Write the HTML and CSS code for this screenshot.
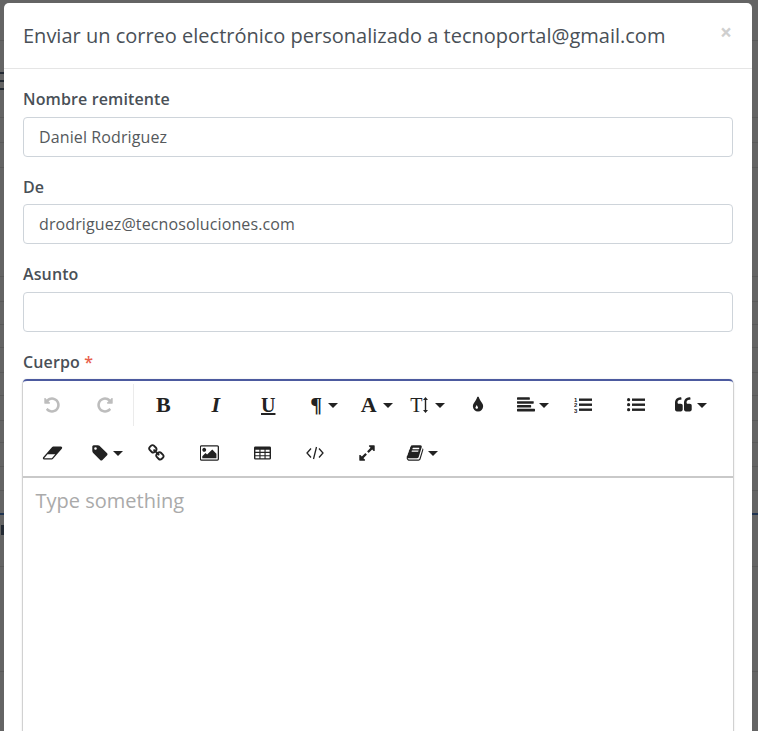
FILE: index.html
```html
<!DOCTYPE html>
<html lang="es">
  <head>
    <meta charset="UTF-8" />
    <title>Enviar correo</title>
    <link rel="stylesheet" href="styles.css">
  </head>
  <body>
    <div class="modal">
      <div class="modal-header">
        <h2>Enviar un correo electrónico personalizado a tecnoportal@gmail.com</h2>
        <span class="close">×</span>
      </div>
      <form class="modal-body">
        <div class="form-group">
          <label for="nombre">Nombre remitente</label>
          <input type="text" id="nombre" value="Daniel Rodriguez" />
        </div>
        <div class="form-group">
          <label for="de">De</label>
          <input type="text" id="de" value="drodriguez@tecnosoluciones.com" />
        </div>
        <div class="form-group">
          <label for="asunto">Asunto</label>
          <input type="text" id="asunto" />
        </div>
        <div class="form-group">
          <label>Cuerpo <span class="req">*</span></label>
          <div class="editor">
            <div class="toolbar">
              <!-- primera fila -->
              <button type="button" class="btn off">
                <svg width="18" height="18" viewBox="0 0 1792 1792"><path d="M1664 896q0 156-61 298t-164 245-245 164-298 61q-172 0-327-72.5t-264-204.5q-7-10-6.5-22.5t8.5-20.5l137-138q10-9 25-9 16 2 23 12 73 95 179 147t225 52q104 0 198.5-40.5t163.5-109.5 109.5-163.5 40.5-198.5-40.5-198.5-109.5-163.5-163.5-109.5-198.5-40.5q-98 0-188 35.5t-160 101.5l137 138q31 30 14 69-17 40-59 40h-448q-26 0-45-19t-19-45v-448q0-42 40-59 39-17 69 14l130 129q107-101 244.5-156.5t284.5-55.5q156 0 298 61t245 164 164 245 61 298z"/></svg>
              </button>
              <button type="button" class="btn off">
                <svg class="flip" width="18" height="18" viewBox="0 0 1792 1792"><path d="M1664 896q0 156-61 298t-164 245-245 164-298 61q-172 0-327-72.5t-264-204.5q-7-10-6.5-22.5t8.5-20.5l137-138q10-9 25-9 16 2 23 12 73 95 179 147t225 52q104 0 198.5-40.5t163.5-109.5 109.5-163.5 40.5-198.5-40.5-198.5-109.5-163.5-163.5-109.5-198.5-40.5q-98 0-188 35.5t-160 101.5l137 138q31 30 14 69-17 40-59 40h-448q-26 0-45-19t-19-45v-448q0-42 40-59 39-17 69 14l130 129q107-101 244.5-156.5t284.5-55.5q156 0 298 61t245 164 164 245 61 298z"/></svg>
              </button>
              <span class="sep"></span>
              <button type="button" class="btn"><span class="glyph bold">B</span></button>
              <button type="button" class="btn"><span class="glyph ital">I</span></button>
              <button type="button" class="btn"><span class="glyph under">U</span></button>
              <button type="button" class="btn drop"><span class="glyph bold">¶</span><i class="caret"></i></button>
              <button type="button" class="btn drop"><span class="glyph bold">A</span><i class="caret"></i></button>
              <button type="button" class="btn drop wide">
                <span class="glyph size">T</span>
                <svg width="5" height="16" viewBox="0 0 5 16"><path d="M2.5 0L5 3H3.2V13H5L2.5 16 0 13H1.8V3H0z"/></svg>
                <i class="caret"></i>
              </button>
              <button type="button" class="btn">
                <svg width="18" height="18" viewBox="0 0 1792 1792"><path d="M896 1152q0-36-20-69-1-1-15.5-22.5t-25.5-38-25-44-21-50.5q-4-16-21-16t-21 16q-7 23-21 50.5t-25 44-25.5 38-15.5 22.5q-20 33-20 69 0 53 37.5 90.5t90.5 37.5 90.5-37.5 37.5-90.5zm512-128q0 212-150 362t-362 150-362-150-150-362q0-145 81-275 6-9 62.5-90.5t101-151 99.5-178 83-201.5q9-30 34-47t51-17 51.5 17 33.5 47q28 93 83 201.5t99.5 178 101 151 62.5 90.5q81 127 81 275z"/></svg>
              </button>
              <button type="button" class="btn drop">
                <svg width="18" height="18" viewBox="0 0 1792 1792"><path d="M1792 1344v128q0 26-19 45t-45 19h-1664q-26 0-45-19t-19-45v-128q0-26 19-45t45-19h1664q26 0 45 19t19 45zm-384-384v128q0 26-19 45t-45 19h-1280q-26 0-45-19t-19-45v-128q0-26 19-45t45-19h1280q26 0 45 19t19 45zm256-384v128q0 26-19 45t-45 19h-1536q-26 0-45-19t-19-45v-128q0-26 19-45t45-19h1536q26 0 45 19t19 45zm-384-384v128q0 26-19 45t-45 19h-1152q-26 0-45-19t-19-45v-128q0-26 19-45t45-19h1152q26 0 45 19t19 45z"/></svg>
                <i class="caret"></i>
              </button>
              <button type="button" class="btn">
                <svg width="18" height="18" viewBox="0 0 18 18">
                  <text class="nums" x="0" y="5.5">1</text>
                  <text class="nums" x="0" y="11">2</text>
                  <text class="nums" x="0" y="16.5">3</text>
                  <rect x="5" y="2.5" width="13" height="2.4"/>
                  <rect x="5" y="7.5" width="13" height="2.4"/>
                  <rect x="5" y="12.5" width="13" height="2.4"/>
                </svg>
              </button>
              <button type="button" class="btn">
                <svg width="18" height="18" viewBox="0 0 18 18">
                  <circle cx="1.6" cy="3.7" r="1.6"/>
                  <circle cx="1.6" cy="8.7" r="1.6"/>
                  <circle cx="1.6" cy="13.7" r="1.6"/>
                  <rect x="5" y="2.5" width="13" height="2.4"/>
                  <rect x="5" y="7.5" width="13" height="2.4"/>
                  <rect x="5" y="12.5" width="13" height="2.4"/>
                </svg>
              </button>
              <button type="button" class="btn drop">
                <svg width="18" height="18" viewBox="0 0 1792 1792"><path d="M768 960v384q0 80-56 136t-136 56h-384q-80 0-136-56t-56-136v-704q0-104 40.5-198.5t109.5-163.5 163.5-109.5 198.5-40.5h64q26 0 45 19t19 45v128q0 26-19 45t-45 19h-64q-106 0-181 75t-75 181v32q0 40 28 68t68 28h224q80 0 136 56t56 136zm896 0v384q0 80-56 136t-136 56h-384q-80 0-136-56t-56-136v-704q0-104 40.5-198.5t109.5-163.5 163.5-109.5 198.5-40.5h64q26 0 45 19t19 45v128q0 26-19 45t-45 19h-64q-106 0-181 75t-75 181v32q0 40 28 68t68 28h224q80 0 136 56t56 136z"/></svg>
                <i class="caret"></i>
              </button>

              <!-- segunda fila -->
              <button type="button" class="btn">
                <svg width="21" height="18" viewBox="0 0 2048 1792"><path d="M960 1408l336-384h-768l-336 384h768zm1013-1077q15 34 9.5 71.5t-30.5 65.5l-896 1024q-38 44-96 44h-768q-38 0-69.5-20.5t-47.5-54.5q-15-34-9.5-71.5t30.5-65.5l896-1024q38-44 96-44h768q38 0 70 20.5t47 54.5z"/></svg>
              </button>
              <button type="button" class="btn drop">
                <svg width="18" height="18" viewBox="0 0 1792 1792"><path d="M576 448q0-53-37.5-90.5t-90.5-37.5-90.5 37.5-37.5 90.5 37.5 90.5 90.5 37.5 90.5-37.5 37.5-90.5zm1067 576q0 53-37 90l-491 492q-39 37-91 37-53 0-90-37l-715-716q-38-37-64.5-101t-26.5-117v-416q0-52 38-90t90-38h416q53 0 117 26.5t102 64.5l715 714q37 39 37 91z"/></svg>
                <i class="caret"></i>
              </button>
              <button type="button" class="btn">
                <svg width="18" height="18" viewBox="0 0 1792 1792"><path d="M1456 1216q0-40-28-68l-208-208q-28-28-68-28-42 0-72 32 3 3 19 18.5t21.5 21.5 15 19 13 25.5 3.5 27.5q0 40-28 68t-68 28q-15 0-27.5-3.5t-25.5-13-19-15-21.5-21.5-18.5-19q-33 31-33 73 0 40 28 68l206 207q27 27 68 27 40 0 68-26l147-146q28-28 28-67zm-703-705q0-40-28-68l-206-207q-28-28-68-28-39 0-68 27l-147 146q-28 28-28 67 0 40 28 68l208 208q27 27 68 27 42 0 72-31-3-3-19-18.5t-21.5-21.5-15-19-13-25.5-3.5-27.5q0-40 28-68t68-28q15 0 27.5 3.5t25.5 13 19 15 21.5 21.5 18.5 19q33-31 33-73zm895 705q0 120-85 203l-147 146q-83 83-203 83-121 0-204-85l-206-207q-83-83-83-203 0-123 88-209l-88-88q-86 88-208 88-120 0-204-84l-208-208q-84-84-84-204t85-203l147-146q83-83 203-83 121 0 204 85l206 207q83 83 83 203 0 123-88 209l88 88q86-88 208-88 120 0 204 84l208 208q84 84 84 204z"/></svg>
              </button>
              <button type="button" class="btn">
                <svg width="20" height="18" viewBox="0 0 1920 1792"><path d="M576 576q0 80-56 136t-136 56-136-56-56-136 56-136 136-56 136 56 56 136zm1024 384v448h-1408v-192l320-320 160 160 512-512zm96-704h-1600q-13 0-22.5 9.5t-9.5 22.5v1216q0 13 9.5 22.5t22.5 9.5h1600q13 0 22.5-9.5t9.5-22.5v-1216q0-13-9.5-22.5t-22.5-9.5zm160 32v1216q0 66-47 113t-113 47h-1600q-66 0-113-47t-47-113v-1216q0-66 47-113t113-47h1600q66 0 113 47t47 113z"/></svg>
              </button>
              <button type="button" class="btn">
                <svg width="17" height="14" viewBox="0 0 18 14"><path fill-rule="evenodd" d="M1.5 0h15A1.5 1.5 0 0 1 18 1.5v11a1.5 1.5 0 0 1-1.500 1.500h-15A1.500 1.500 0 0 1 0 12.500v-11A1.500 1.500 0 0 1 1.500 0zM1.500 3.500v2.300h4.200V3.500zm5.400 0v2.300h4.200V3.500zm5.400 0v2.300h4.200V3.500zM1.500 7v2.300h4.200V7zm5.400 0v2.300h4.200V7zm5.400 0v2.300h4.200V7zM1.500 10.500v2h4.200v-2zm5.400 0v2h4.200v-2zm5.400 0v2h4.200v-2z"/></svg>
              </button>
              <button type="button" class="btn">
                <svg width="18" height="14" viewBox="0 0 18 14"><path class="thin" d="M5 2.500L1 7l4 4.500M13 2.500L17 7l-4 4.500M10.500 1L7.500 13"/></svg>
              </button>
              <button type="button" class="btn">
                <svg width="18" height="18" viewBox="0 0 1792 1792"><path d="M883 1056q0 13-10 23l-332 332 144 144q19 19 19 45t-19 45-45 19h-448q-26 0-45-19t-19-45v-448q0-26 19-45t45-19 45 19l144 144 332-332q10-10 23-10t23 10l114 114q10 10 10 23zm781-864v448q0 26-19 45t-45 19-45-19l-144-144-332 332q-10 10-23 10t-23-10l-114-114q-10-10-10-23t10-23l332-332-144-144q-19-19-19-45t19-45 45-19h448q26 0 45 19t19 45z"/></svg>
              </button>
              <button type="button" class="btn drop">
                <svg width="18" height="18" viewBox="0 0 1792 1792"><path d="M1703 478q40 57 18 129l-275 906q-19 64-76.500 107.500t-122.500 43.500h-923q-77 0-148.500-53.500t-99.500-131.500q-24-67-2-127 0-4 3-27t4-37q1-8-3-21.500t-3-19.500q2-11 8-21t16.500-23.500 16.500-23.500q23-38 45-91.500t30-91.500q3-10 .5-30t-.5-28q3-11 17-28t17-23q21-36 42-92t25-90q1-9-2.500-32t.5-28q4-13 22-30.500t22-22.500q19-26 42.500-84.500t27.500-96.500q1-8-3-25.500t-2-26.500q2-8 9-18t18-23 17-21q8-12 16.500-30.500t15-35 16-36 19.500-32 26.500-23.500 36-11.500 47.500 5.500l-1 3q38-9 51-9h761q74 0 114 56t18 130l-274 906q-36 119-71.500 153.500t-128.500 34.500h-869q-27 0-38 15-11 16-1 43 24 70 144 70h923q29 0 56-15.500t35-41.500l300-987q7-22 5-57 38 15 59 43zm-1064 2q-4 13 2 22.500t20 9.500h608q13 0 25.500-9.500t16.500-22.500l21-64q4-13-2-22.500t-20-9.500h-608q-13 0-25.500 9.500t-16.500 22.500zm-83 256q-4 13 2 22.500t20 9.500h608q13 0 25.500-9.500t16.500-22.500l21-64q4-13-2-22.500t-20-9.500h-608q-13 0-25.500 9.500t-16.500 22.500z"/></svg>
                <i class="caret"></i>
              </button>
            </div>
            <div class="editor-area">Type something</div>
          </div>
        </div>
      </form>
    </div>
  </body>
</html>
```

FILE: styles.css
```css
html,
body {
  margin: 0;
}

/* fondo oscurecido detras del modal: se ve solo en los bordes */
body {
  --dark: linear-gradient(#232a33, #232a33);
  --blue: linear-gradient(#1f3350, #1f3350);
  --line: linear-gradient(#595959, #595959);
  height: 731px;
  overflow: hidden;
  box-sizing: border-box;
  padding: 3px 6px 0 4px;
  font-family: "Open Sans", sans-serif;
  color: #495057;
  background-color: #646464;
  background-image:
    var(--dark), var(--dark), var(--dark), var(--dark), var(--blue),
    var(--line), var(--line), var(--line), var(--line), var(--line),
    var(--line), var(--line), var(--line), var(--line), var(--line),
    var(--line), var(--line), var(--line), var(--line), var(--line), var(--line);
  background-repeat: no-repeat;
  background-size:
    4px 2px, 4px 2px, 4px 2px, 3px 10px, 100% 2px,
    100% 1px, 100% 1px, 100% 1px, 100% 1px, 100% 1px,
    100% 1px, 100% 1px, 100% 1px, 100% 1px, 100% 1px,
    100% 1px, 100% 1px, 100% 1px, 100% 1px, 100% 1px, 100% 1px;
  background-position:
    0 72px, 0 80px, 0 88px, 1px 525px, 0 513px,
    0 40px, 0 117px, 0 142px, 0 167px, 0 276px,
    0 301px, 0 324px, 0 347px, 0 372px, 0 395px,
    0 420px, 0 442px, 0 466px, 0 490px, 0 566px, 0 671px;
}

.modal {
  background-color: #fff;
  border-radius: 5px 5px 0 0;
  height: 800px;
}

.modal-header {
  display: flex;
  justify-content: space-between;
  height: 66px;
  box-sizing: border-box;
  padding: 18px 19px 0;
  border-bottom: 1px solid #e5e5e5;
}

.modal-header h2 {
  margin: 0;
  font-size: 20px;
  font-weight: 400;
  line-height: 30px;
}

.close {
  font-size: 21px;
  font-weight: 700;
  line-height: 23px;
  color: #cfcfcf;
  margin-right: 1px;
}

.modal-body {
  padding: 18px 19px;
}

.form-group {
  margin-bottom: 18px;
}

label {
  display: block;
  font-size: 16px;
  font-weight: 600;
  line-height: 24px;
  margin-bottom: 5.5px;
  letter-spacing: 0.12px;
}

.req {
  color: #e8604c;
}

input[type="text"] {
  display: block;
  width: 100%;
  height: 40px;
  box-sizing: border-box;
  padding: 0 15px;
  border: 1px solid #ced4da;
  border-radius: 4px;
  font-family: inherit;
  font-size: 16px;
  letter-spacing: 0.11px;
  color: #55595c;
}

.editor {
  border-top: 2px solid #4c5a9f;
  border-radius: 4px 4px 0 0;
  box-shadow: 0 1px 3px rgba(0, 0, 0, 0.12), 0 1px 1px 1px rgba(0, 0, 0, 0.16);
}

.toolbar {
  display: flex;
  flex-wrap: wrap;
  align-content: flex-start;
  box-sizing: border-box;
  height: 97px;
  padding: 0 3px;
  border-bottom: 2px solid #c9c9c9;
}

.btn {
  display: flex;
  align-items: center;
  justify-content: center;
  width: 52.5px;
  height: 48px;
  padding: 0;
  border: none;
  background: none;
  color: #222;
  fill: #222;
}

.btn.drop {
  gap: 4px;
  padding-left: 5px;
}

.btn.drop.wide {
  gap: 7px;
  padding-left: 4px;
}

.btn.off {
  fill: #bdbdbd;
}

.flip {
  transform: scaleX(-1);
}

.thin {
  fill: none;
  stroke: #222;
  stroke-width: 1.3;
}

.nums {
  font-family: "Liberation Sans", sans-serif;
  font-size: 6px;
  font-weight: 700;
}

.sep {
  width: 1px;
  height: 42px;
  margin: 3px 3px 0 2px;
  background-color: #ebebeb;
}

.glyph {
  font-family: "Liberation Serif", serif;
  font-size: 22px;
  line-height: 24px;
}

.glyph.bold {
  margin: 0 2px;
}

.bold {
  font-weight: 700;
}

.ital {
  font-weight: 700;
  font-style: italic;
}

.under {
  font-weight: 700;
  font-size: 20px;
  text-decoration: underline;
}

.size {
  font-size: 20px;
  margin-right: -6px;
}

.caret {
  flex: none;
  width: 0;
  height: 0;
  border-left: 5px solid transparent;
  border-right: 5px solid transparent;
  border-top: 5px solid #222;
}

.editor-area {
  padding: 8px 12.5px;
  height: 400px;
  font-size: 20px;
  line-height: 30px;
  color: #aaa;
}
```
